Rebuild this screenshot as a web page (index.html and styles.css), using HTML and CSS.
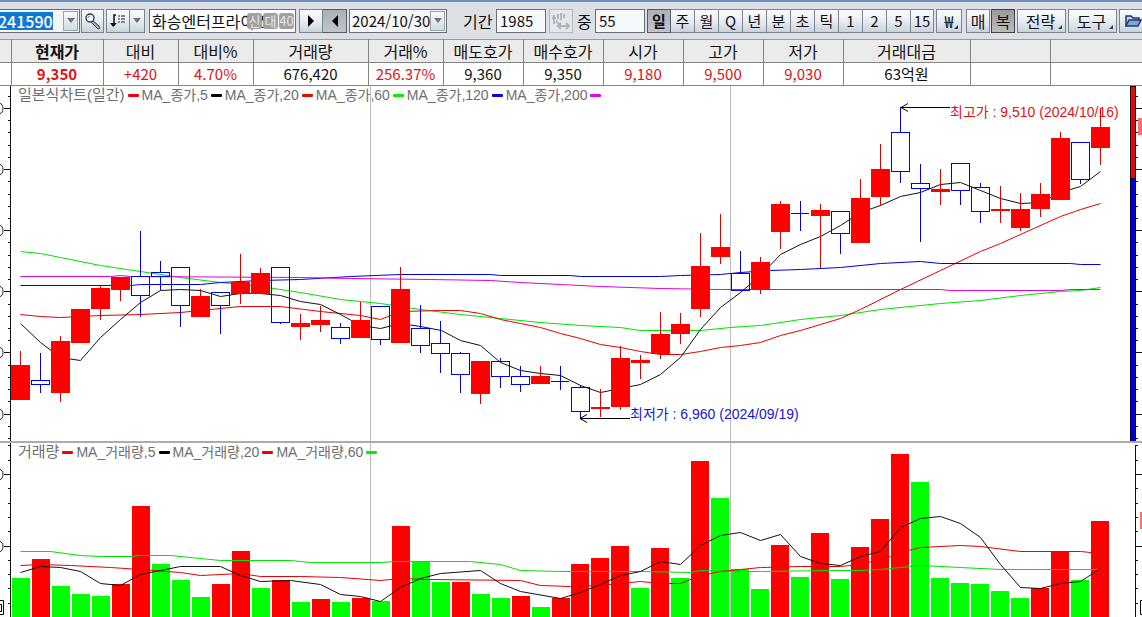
FILE: index.html
```html
<!DOCTYPE html>
<html lang="ko">
<head>
<meta charset="utf-8">
<title>일본식차트</title>
<link rel="stylesheet" href="styles.css">
</head>
<body>
<header class="toolbar">
  <div class="combo combo-code">
    <input class="code" type="text" value="241590" aria-label="종목코드">
    <button class="drop" type="button" aria-label="종목 목록"><span class="caret"></span></button>
  </div>
  <button class="btn search" type="button" aria-label="검색">
    <svg width="18" height="18" viewBox="0 0 18 18"><path d="M8 8l7 6 1 2-2 1-7-7z" fill="#8fb4cc" stroke="#33444f"/><circle cx="6" cy="6" r="4" fill="#f2f7fa" stroke="#333" stroke-width="1.3"/><path d="M4 6a2 2 0 0 1 2-2" fill="none" stroke="#888"/></svg>
  </button>
  <div class="group list">
    <button class="btn" type="button" aria-label="정렬">
      <svg width="18" height="16" viewBox="0 0 18 16"><path d="M7 2H5v11" fill="none" stroke="#111" stroke-width="1.5"/><path d="M1 10h7l-4 4z" fill="#111"/><path d="M9 3h2m1 0h4M9 6h2m1 0h4M9 9h2m1 0h4" stroke="#222" stroke-width="1.2"/></svg>
    </button>
    <button class="btn narrow" type="button" aria-label="정렬 메뉴"><span class="caret"></span></button>
  </div>
  <div class="name-box">
    <input class="field name" type="text" value="화승엔터프라이즈" aria-label="종목명">
    <div class="badges"><span>신</span><span>대</span><span>40</span></div>
  </div>
  <div class="group nav">
    <button class="btn" type="button" aria-label="다음"><svg width="8" height="12" viewBox="0 0 8 12"><path d="M1 0l6 6-6 6z" fill="#000"/></svg></button>
    <button class="btn pressed" type="button" aria-label="이전"><svg width="8" height="12" viewBox="0 0 8 12"><path d="M7 0L1 6l6 6z" fill="#000"/></svg></button>
  </div>
  <div class="combo combo-date">
    <input class="date" type="text" value="2024/10/30" aria-label="날짜">
    <button class="drop" type="button" aria-label="달력"><span class="caret"></span></button>
  </div>
  <label class="label" for="period">기간</label>
  <input class="field num" id="period" type="text" value="1985">
  <button class="btn off" type="button" disabled aria-label="간격">
    <svg width="20" height="18" viewBox="0 0 20 18" fill="none" stroke="#b0b6bc" stroke-width="2"><path d="M3 3v9M1 6h4M7 2v5M10 1v7M13 2v4M5 9l3 3M7 14h11M10 11l-3 3 3 3M15 11l3 3-3 3"/></svg>
  </button>
  <label class="label mid" for="shown">중</label>
  <input class="field num" id="shown" type="text" value="55">
  <div class="group units">
    <button class="btn pressed" type="button">일</button>
    <button class="btn" type="button">주</button>
    <button class="btn" type="button">월</button>
    <button class="btn" type="button">Q</button>
    <button class="btn" type="button">년</button>
    <button class="btn" type="button">분</button>
    <button class="btn" type="button">초</button>
    <button class="btn" type="button">틱</button>
    <button class="btn" type="button">1</button>
    <button class="btn" type="button">2</button>
    <button class="btn" type="button">5</button>
    <button class="btn" type="button">15</button>
  </div>
  <button class="btn menu won" type="button">₩</button>
  <button class="btn unit" type="button">매</button>
  <button class="btn unit dark" type="button">복</button>
  <button class="btn menu wide" type="button">전략</button>
  <button class="btn menu wide" type="button">도구</button>
  <button class="btn folder" type="button" aria-label="열기">
    <svg width="18" height="16" viewBox="0 0 18 16"><path d="M2 13V3h5l2 2h6v3" fill="#b9d2f0" stroke="#223a66" stroke-width="1.5"/><path d="M2 13l3-6h12l-3 6z" fill="#7fa5d8" stroke="#223a66" stroke-width="1.5"/></svg>
  </button>
</header>

<table class="quote">
  <colgroup><col class="w-edge"><col class="w-price"><col class="w-diff"><col class="w-diff"><col class="w-vol"><col class="w-diff"><col class="w-ask"><col class="w-ask"><col class="w-ask"><col class="w-ask"><col class="w-ask"><col class="w-amount"><col class="w-ask"><col></colgroup>
  <thead>
    <tr><th></th><th class="strong">현재가</th><th>대비</th><th>대비%</th><th>거래량</th><th>거래%</th><th>매도호가</th><th>매수호가</th><th>시가</th><th>고가</th><th>저가</th><th>거래대금</th><th></th><th></th></tr>
  </thead>
  <tbody>
    <tr><td></td><td class="up strong">9,350</td><td class="up">+420</td><td class="up">4.70%</td><td>676,420</td><td class="up">256.37%</td><td>9,360</td><td>9,350</td><td class="up">9,180</td><td class="up">9,500</td><td class="up">9,030</td><td>63억원</td><td></td><td></td></tr>
  </tbody>
</table>

<main>
  <section class="panel">
    <svg class="chart" id="price" viewBox="0 86 1142 355" role="img" aria-label="일본식차트"></svg>
    <div class="legend">
      <span class="title">일본식차트(일간)</span><i class="red"></i><span>MA_종가,5</span><i class="black"></i><span>MA_종가,20</span><i class="red"></i><span>MA_종가,60</span><i class="green"></i><span>MA_종가,120</span><i class="blue"></i><span>MA_종가,200</span><i class="magenta"></i>
    </div>
  </section>
  <section class="panel volume">
    <svg class="chart" id="volume" viewBox="0 443 1142 174" role="img" aria-label="거래량"></svg>
    <div class="legend">
      <span class="title">거래량</span><i class="red"></i><span>MA_거래량,5</span><i class="black"></i><span>MA_거래량,20</span><i class="red"></i><span>MA_거래량,60</span><i class="green"></i>
    </div>
  </section>
</main>
<script src="chart.js"></script>
</body>
</html>
```
FILE: styles.css
```css
* { box-sizing: border-box; }
body {
  margin: 0;
  background: #fff;
  color: #111;
  font: 16px/20px "Noto Sans CJK KR", sans-serif;
  overflow: hidden;
}
input, button { font: inherit; color: inherit; margin: 0; padding: 0; border-radius: 0; }
input { min-width: 0; outline: 0; }

.toolbar {
  display: flex;
  align-items: center;
  height: 39px;
  border-top: 2px solid #6d8fc0;
  background: #dce0e5;
  overflow: hidden;
  white-space: nowrap;
}
.toolbar > * { flex: none; }
.combo {
  display: flex;
  align-items: center;
  height: 24px;
  padding: 1px;
  border: 1px solid #667079;
  background: #f4f6f9;
}
.combo-code { width: 80px; border-left: 0; justify-content: space-between; padding-left: 0; }
.combo-date { width: 98px; margin-left: 2px; }
.combo input { border: 0; background: transparent; height: 18px; }
.combo .code { width: 53px; background: #0f78d4; color: #fff; font-size: 16px; font-weight: 500; text-indent: -2px; }
.combo .date { flex: 1; font-size: 15px; padding-left: 1px; }
.drop {
  width: 15px;
  height: 20px;
  border: 1px solid #9aa2aa;
  background: linear-gradient(#fafbfc, #d3dae2);
}
.caret {
  display: block;
  width: 0;
  margin: 0 auto;
  border: 4px solid transparent;
  border-top: 5px solid #6c757e;
  border-bottom: 0;
}
.btn {
  display: flex;
  align-items: center;
  justify-content: center;
  height: 24px;
  border: 1px solid #7b858f;
  background: linear-gradient(#fbfcfd, #e8edf2 50%, #c9d2dc);
}
.search { width: 23px; margin-left: 1px; }
.group { display: flex; }
.group .btn + .btn { border-left: 0; }
.list { margin-left: 2px; }
.list .btn { width: 24px; }
.list .narrow { width: 15px; }
.pressed { background: linear-gradient(#aaafb8, #c0c5cd); border-color: #555d66; font-weight: 700; }
.dark { background: linear-gradient(#9b9b9b, #bcbcbc); border-color: #444; }
.name-box { position: relative; margin-left: 4px; }
.field { height: 24px; border: 1px solid #667079; background: #f6f8fa; padding-left: 3px; }
.name { display: block; width: 147px; background: #fff; padding-left: 2px; }
.badges { position: absolute; right: 2px; top: 4px; display: flex; gap: 1px; }
.badges span {
  width: 15px;
  height: 16px;
  border-radius: 3px;
  background: #a0a0a0;
  color: #e6e6e6;
  font-size: 13px;
  line-height: 16px;
  text-align: center;
}
.nav { margin-left: 3px; }
.nav .btn { width: 24px; }
.label { width: 49px; padding-left: 16px; }
.num { width: 50px; font-size: 15px; }
.off { width: 24px; margin-left: 3px; border-color: #b4bac1; background: #e4e7eb; }
.label.mid { width: 22px; padding-left: 4px; }
.units { margin-left: 2px; }
.units .btn { width: 24px; font-size: 15px; }
.units .btn:last-child { width: 23px; }
.won { width: 26px; margin-left: 2px; }
.unit { width: 24px; margin-left: 4px; }
.dark.unit { margin-left: 1px; }
.menu { position: relative; }
.menu::after {
  content: "";
  position: absolute;
  right: 3px;
  bottom: 3px;
  border: 2px solid #33414e;
  border-top-color: transparent;
  border-left-color: transparent;
}
.wide { width: 49px; margin-left: 2px; padding-right: 2px; }
.folder { width: 28px; margin-left: 2px; }

.quote {
  width: 100%;
  table-layout: fixed;
  border-collapse: collapse;
  text-align: center;
}
.quote th, .quote td { padding: 0; height: 23px; border: 1px solid #848484; border-top-color: #9a9a9a; overflow: hidden; }
.quote th { background: #ebebeb; font-weight: 400; }
.quote td { font-size: 15px; }
.quote tr > :first-child { border-left: 0; }
.quote tr > :last-child { border-right: 0; }
.quote .strong { font-weight: 700; }
.quote .up { color: #dc1414; }
.w-edge { width: 11px; }
.w-price { width: 92px; }
.w-diff { width: 75px; }
.w-vol { width: 115px; }
.w-ask { width: 80px; }
.w-amount { width: 127px; }

.panel { position: relative; }
.volume { border-top: 2px solid #acacac; }
.chart { display: block; width: 100%; height: auto; font: 14px "Liberation Sans", "Noto Sans CJK KR", sans-serif; }
.legend {
  position: absolute;
  top: 0;
  left: 18px;
  display: flex;
  align-items: center;
  gap: 3px;
  height: 18px;
  color: #6e6e6e;
  font: 14px/18px "Liberation Sans", "Noto Sans CJK KR", sans-serif;
  white-space: nowrap;
}
.legend .title { font-size: 15px; }
.legend i { width: 11px; height: 3px; border-radius: 1px; }
.red { background: #f00000; }
.black { background: #000; }
.green { background: #00f000; }
.blue { background: #0000e0; }
.magenta { background: #e800e8; }

.crisp { shape-rendering: crispEdges; }
.grid { stroke: #bdbdbd; }
.axis { stroke: #111; }
.ma { fill: none; stroke-width: 1; }
.c-black { stroke: #111; }
.c-red { stroke: #e80000; }
.c-green { stroke: #00e400; }
.c-blue { stroke: #0000e0; }
.c-magenta { stroke: #e000e0; }
.wick-up { stroke: #e00000; stroke-width: 1; }
.wick-down { stroke: #0000e0; stroke-width: 1; }
.body-up { fill: #ff0000; }
.body-down { fill: none; stroke: #0000ff; stroke-width: 1; }
.bar-up { fill: #ff0000; }
.bar-down { fill: #00ff00; }
.tag { fill: #ff7070; }
.gauge-up { fill: #d81010; stroke: #300; }
.gauge-down { fill: #0000d0; stroke: #003; }
.arrow { fill: none; stroke: #000; }
.note-high { fill: #e01414; }
.note-low { fill: #1414dc; }
.digit { fill: none; stroke: #222; }
```
FILE: chart.js
```js
const STEP = 20;

// One entry per day: direction, high, body top, body bottom, low.
const candles = [
  ["u",351,365,400,400],["d",353,380,384,393],["u",336,341,393,402],["u",309,309,343,343],["u",285,288,309,320],
  ["u",277,277,290,301],["d",231,276,295,317],["d",261,272,276,290],["d",267,267,305,327],["u",289,296,317,317],
  ["d",292,292,305,334],["u",254,282,294,304],["u",268,273,294,294],["d",267,267,322,324],["u",314,323,327,340],
  ["u",306,320,325,332],["d",323,327,338,344],["u",302,320,338,338],["d",306,306,339,345],["u",267,289,343,343],
  ["d",305,328,345,353],["d",321,343,353,373],["d",352,353,374,393],["u",361,361,394,404],["d",358,361,376,388],
  ["d",366,376,384,392],["u",366,376,384,384],["d",366,381,381,390],["d",385,387,411,419],["u",389,407,409,417],
  ["u",346,358,407,410],["u",355,360,363,379],["u",312,334,354,359],["u",313,324,334,344],["u",233,266,309,317],
  ["u",214,247,257,264],["d",251,273,290,290],["u",257,262,290,294],["u",201,204,232,249],["d",201,213,213,231],
  ["u",204,210,216,268],["d",211,211,233,254],["u",179,198,243,243],["u",144,169,197,205],["d",107,132,171,183],
  ["d",164,183,188,242],["u",169,189,192,205],["d",163,163,190,205],["d",183,187,211,223],["u",186,209,211,223],
  ["u",193,209,228,231],["u",183,194,209,217],["u",132,138,200,200],["d",142,142,179,184],["u",108,127,148,165]
];

const averages = {
  green: "20,251 40,253 60,257 100,265 140,271 180,277 220,282 260,286 300,292 340,299 380,303 400,306 420,309 460,314 500,318 540,322 580,325 620,327 640,330 700,330 730,327 760,325 800,319 840,315 880,309 940,303 980,300 1020,295 1060,291 1080,290 1100,287",
  red: "20,314 40,316 60,317 80,316 100,315 140,314 180,312 220,308 240,306 280,306 320,311 360,315 380,319 400,311 440,310 460,310 480,313 500,319 520,323 540,327 560,333 580,338 600,344 620,347 640,351 660,354 680,354 700,351 720,347 740,345 760,342 780,335 800,330 820,324 840,318 860,309 900,289 940,270 980,251 1000,243 1020,234 1060,216 1080,209 1100,203",
  blue: "20,285 130,285 140,284 200,284 220,282 260,280 300,279 350,276 400,274 490,274 500,275 570,275 580,276 660,276 680,275 720,274 740,272 770,270 800,269 840,267 880,263 920,261 940,263 1070,263 1080,264 1100,264",
  magenta: "20,276 110,276 120,275 130,276 300,277 350,278 430,279 490,280 520,282 560,284 600,286 660,288 720,289 940,289 950,290 1060,290 1070,289 1100,289",
  black: "20,323 40,342 60,357 80,360 100,337 120,319 140,302 160,290 180,289 200,290 220,296 240,293 260,293 280,295 300,301 320,304 340,314 360,325 380,328 400,323 420,326 441,330 460,340 480,345 500,362 520,370 540,373 560,375 580,385 600,392 620,388 640,384 660,374 680,357 700,329 720,307 740,292 760,275 780,254 800,244 820,236 840,225 860,212 880,205 900,196 920,192 940,184 960,182 980,190 1000,198 1020,203 1040,202 1060,192 1080,186 1100,171"
};

const volumes = [
  ["d",578],["u",559],["d",586],["d",594],["d",596],["u",584],["u",506],["d",564],["d",580],["d",597],["u",584],
  ["u",551],["d",588],["u",580],["d",602],["u",599],["d",602],["u",598],["d",601],["u",526],["d",561],["d",582],
  ["u",582],["d",594],["d",598],["u",596],["d",607],["u",598],["u",564],["u",558],["u",546],["d",588],["u",548],
  ["d",578],["u",461],["d",498],["d",569],["d",589],["u",545],["d",577],["u",533],["d",579],["u",547],["u",519],
  ["u",454],["d",482],["d",578],["d",583],["d",584],["d",591],["d",598],["u",588],["u",551],["d",580],["u",521]
];

const volumeAverages = {
  green: "20,551 50,551 80,555 100,556 130,556 140,555 170,555 220,560 290,560 310,562 380,562 395,561 470,561 500,564 520,570 560,571 640,571 690,572 700,570 740,571 760,571 830,570 860,570 880,569 920,565 960,567 1000,569 1100,569",
  red: "20,565 40,564 70,565 110,567 140,569 180,572 200,575 240,573 260,576 300,576 340,577 380,580 400,578 430,579 520,580 540,585 570,586 600,585 640,581 660,583 680,583 700,575 720,571 740,569 760,567 800,566 840,566 860,564 890,556 900,552 920,547 960,545 980,546 1020,551 1080,551 1100,553",
  black: "20,572 40,566 60,567 80,571 100,583 120,585 140,574 160,570 180,566 220,566 240,575 260,581 290,580 320,584 340,594 360,596 380,601 400,587 420,578 440,573 480,570 500,583 520,591 560,598 580,592 600,584 620,575 640,571 660,561 680,564 700,545 720,535 740,532 760,540 780,534 800,556 820,563 840,565 860,556 880,551 900,527 920,518 940,516 960,523 980,537 1000,564 1020,587 1040,588 1060,583 1080,581 1100,568"
};

const line = (x1, y1, x2, y2, cls) => `<line x1="${x1}" y1="${y1}" x2="${x2}" y2="${y2}" class="${cls}"/>`;
const rect = (x, y, w, h, cls) => `<rect x="${x}" y="${y}" width="${w}" height="${h}" class="${cls}"/>`;
const curves = set => Object.entries(set)
  .map(([color, points]) => `<polyline class="ma c-${color}" points="${points}" transform="translate(.5 .5)"/>`).join("");
const gridLines = (top, bottom) => [370.5, 730.5].map(x => line(x, top, x, bottom, "grid crisp")).join("");

function axes(first, gap, count, top, bottom) {
  let out = line(10.5, top, 10.5, bottom, "axis crisp");
  const last = first + gap * (count - 1);
  for (let k = -6; k <= (count + 1) * 5; k++) {
    const y = Math.round(first + k * gap / 5) + 0.5;
    if (y < top + 2 || y > Math.min(bottom, last + gap * 0.9)) continue;
    const major = k % 5 === 0;
    out += line(major ? 4 : 8, y, 10, y, "axis crisp") + line(1136, y, major ? 1142 : 1138, y, "axis crisp");
    if (major) out += `<ellipse cx="0" cy="${y}" rx="3" ry="5" class="digit"/>`;
  }
  return out;
}

function drawPrice() {
  let out = gridLines(86, 441) + axes(108, 61.1, 6, 86, 441) + curves(averages);
  candles.forEach(([dir, high, top, bottom, low], i) => {
    const x = STEP * (i + 1);
    const wick = dir === "u" ? "wick-up" : "wick-down";
    if (top > high) out += line(x + 0.5, high, x + 0.5, top, wick);
    if (low > bottom) out += line(x + 0.5, bottom, x + 0.5, low, wick);
    if (dir === "u") out += rect(x - 9, top, 19, bottom - top, "body-up crisp");
    else if (top === bottom) out += line(x - 9, top + 0.5, x + 9, top + 0.5, "body-down crisp") + line(x + 0.5, high, x + 0.5, low, wick);
    else out += rect(x - 8.5, top + 0.5, 18, bottom - top, "body-down");
  });
  out += `<path class="arrow" d="M950 107.5H901M908 103.5l-7 4 7 4M630 418.500H580M587 414.500l-7 4 7 4"/>`;
  out += `<text x="950" y="117" class="note-high">최고가 : 9,510 (2024/10/16)</text>`;
  out += `<text x="630" y="419" class="note-low">최저가 : 6,960 (2024/09/19)</text>`;
  out += rect(1130.5, 86, 5, 92, "gauge-up crisp") + rect(1130.5, 178, 5, 263, "gauge-down crisp");
  out += rect(1138, 118, 4, 17, "tag");
  document.getElementById("price").innerHTML = out;
}

function drawVolume() {
  let out = gridLines(443, 617) + axes(474, 71.5, 2, 443, 617) + line(1135.5, 445, 1135.5, 617, "axis crisp");
  volumes.forEach(([dir, top], i) => {
    out += rect(STEP * i + (i < 28 ? 12 : 11), top, 18, 617 - top, (dir === "u" ? "bar-up" : "bar-down") + " crisp");
  });
  out += curves(volumeAverages) + rect(1140, 512, 2, 17, "tag");
  out += `<path class="arrow" d="M0 600.500H3.500V614.500H0M0 604.500H1.500V611.500H0M1142 600.500H1140.500V614.500H1142"/>`;
  document.getElementById("volume").innerHTML = out;
}

drawPrice();
drawVolume();
```
